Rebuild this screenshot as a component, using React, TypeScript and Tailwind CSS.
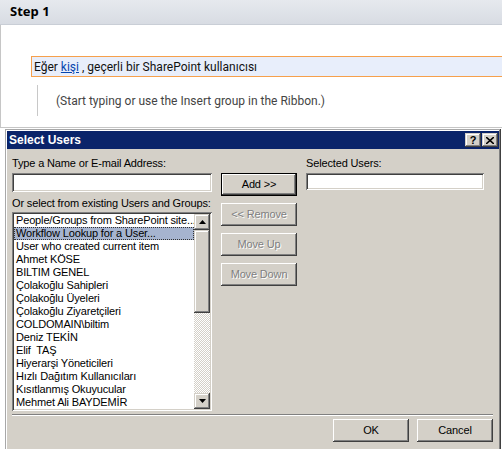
import React from "react";

const raised =
  "shadow-[inset_-1px_-1px_#404040,inset_1px_1px_#ffffff,inset_-2px_-2px_#808080,inset_2px_2px_#d4d0c8]";
const scrollRaised =
  "shadow-[inset_-1px_-1px_#404040,inset_1px_1px_#d4d0c8,inset_-2px_-2px_#808080,inset_2px_2px_#ffffff]";
const sunken =
  "shadow-[inset_1px_1px_#808080,inset_-1px_-1px_#ffffff,inset_2px_2px_#404040,inset_-2px_-2px_#d4d0c8]";

const items = [
  "People/Groups from SharePoint site...",
  "Workflow Lookup for a User...",
  "User who created current item",
  "Ahmet KÖSE",
  "BILTIM GENEL",
  "Çolakoğlu Sahipleri",
  "Çolakoğlu Üyeleri",
  "Çolakoğlu Ziyaretçileri",
  "COLDOMAIN\\biltim",
  "Deniz TEKİN",
  "Elif  TAŞ",
  "Hiyerarşi Yöneticileri",
  "Hızlı Dağıtım Kullanıcıları",
  "Kısıtlanmış Okuyucular",
  "Mehmet Ali BAYDEMİR",
];

function Button({ label, disabled, primary }: { label: string; disabled?: boolean; primary?: boolean }) {
  return (
    <div
      className={`h-[23px] w-[76px] flex items-center justify-center bg-[#d4d0c8] ${
        primary ? "border border-black" : ""
      }`}
    >
      <div className={`w-full h-full flex items-center justify-center ${raised}`}>
        <span
          className={
            disabled
              ? "text-[#808080] [text-shadow:1px_1px_0_#ffffff]"
              : "text-black"
          }
        >
          {label}
        </span>
      </div>
    </div>
  );
}

function Arrow({ up }: { up?: boolean }) {
  return (
    <svg width="7" height="4" viewBox="0 0 7 4">
      {up ? <path d="M3.5 0 L7 4 L0 4 Z" fill="#000" /> : <path d="M0 0 L7 0 L3.5 4 Z" fill="#000" />}
    </svg>
  );
}

export default function App() {
  return (
    <div className="w-[502px] h-[449px] overflow-hidden bg-white">
      {/* page behind the dialog */}
      <div className="h-[25px] border-b border-[#c9ced6] bg-gradient-to-b from-[#e6e9ee] to-[#d8dce3] flex items-center pl-[10px]">
        <span className="font-['Noto_Sans',sans-serif] font-bold text-[13px] text-black">Step 1</span>
      </div>
      <div className="h-[103px] border-l border-b border-[#c6c6c6] flex flex-col">
        <div className="mt-[31px] ml-[30px] h-[21px] border border-r-0 border-[#f6a04c] bg-[#e8eefb] flex items-center pl-[2px] font-['Roboto',sans-serif] text-[12px] text-[#111]">
          Eğer&nbsp;<span className="text-[#0645ad] underline">kişi</span>&nbsp;, geçerli bir SharePoint kullanıcısı
        </div>
        <div className="mt-[8px] ml-[36px] h-[31px] border-l border-[#c8c8c8] flex items-center pl-[18px] font-['Roboto',sans-serif] text-[12px] text-[#444]">
          (Start typing or use the Insert group in the Ribbon.)
        </div>
      </div>

      {/* dialog */}
      <div className="mt-[1px] ml-[5px] w-[496px] h-[330px] bg-[#d4d0c8] p-[2px] font-['Liberation_Sans',Arial,sans-serif] text-[11px] leading-[13px] tracking-[-0.15px] text-black shadow-[inset_-1px_-1px_#404040,inset_1px_1px_#a8a8a8,inset_-2px_-2px_#808080,inset_2px_2px_#ffffff]">
        <div className="h-[18px] bg-[#0a246a] flex items-center justify-between pl-[2px] pr-[1px]">
          <span className="text-white font-bold text-[12px] tracking-normal">Select Users</span>
          <div className="flex gap-[1px]">
            <div className={`w-[16px] h-[14px] bg-[#d4d0c8] flex items-center justify-center font-bold text-[11px] ${scrollRaised}`}>?</div>
            <div className={`w-[16px] h-[14px] bg-[#d4d0c8] flex items-center justify-center ${scrollRaised}`}>
              <svg width="8" height="7" viewBox="0 0 8 7">
                <path d="M0 0 L8 7 M8 0 L0 7" stroke="#000" strokeWidth="1.6" />
              </svg>
            </div>
          </div>
        </div>

        <div className="flex flex-col pl-[5px] pr-[6px]">
          <div className="flex pt-[8px]">
            {/* left column */}
            <div className="w-[200px] flex flex-col">
              <div className="h-[13px]">Type a Name or E-mail Address:</div>
              <div className={`mt-[3px] h-[19px] bg-white ${sunken}`} />
              <div className="mt-[5px] h-[13px] whitespace-nowrap">Or select from existing Users and Groups:</div>
              <div className={`mt-[2px] h-[199px] bg-white p-[2px] flex ${sunken}`}>
                <div className="flex-1 min-w-0 flex flex-col overflow-hidden">
                  {items.map((it, i) => (
                    <div
                      key={it}
                      className={`h-[13px] shrink-0 flex items-center whitespace-pre pl-[1px] ${
                        i === 1 ? "bg-[#a6b4cf] border border-dotted border-[#333]" : "border border-transparent"
                      }`}
                    >
                      {it}
                    </div>
                  ))}
                </div>
                <div className="w-[16px] shrink-0 flex flex-col">
                  <div className={`h-[16px] bg-[#d4d0c8] flex items-center justify-center ${scrollRaised}`}>
                    <Arrow up />
                  </div>
                  <div className={`h-[83px] bg-[#d4d0c8] ${scrollRaised}`} />
                  <div className="flex-1 bg-[repeating-conic-gradient(#ffffff_0_25%,#d4d0c8_0_50%)] bg-[length:2px_2px]" />
                  <div className={`h-[16px] bg-[#d4d0c8] flex items-center justify-center ${scrollRaised}`}>
                    <Arrow />
                  </div>
                </div>
              </div>
            </div>

            {/* middle column */}
            <div className="ml-[9px] pt-[16px] flex flex-col gap-[7px]">
              <Button label="Add >>" primary />
              <Button label="<< Remove" disabled />
              <Button label="Move Up" disabled />
              <Button label="Move Down" disabled />
            </div>

            {/* right column */}
            <div className="ml-[9px] w-[178px] flex flex-col">
              <div className="h-[13px]">Selected Users:</div>
              <div className={`mt-[3px] h-[17px] bg-white ${sunken}`} />
            </div>
          </div>

          <div className="mt-[3px] border-t border-b border-t-[#808080] border-b-white" />

          <div className="mt-[3px] flex justify-end gap-[8px]">
            <Button label="OK" />
            <Button label="Cancel" />
          </div>
        </div>
      </div>
    </div>
  );
}
